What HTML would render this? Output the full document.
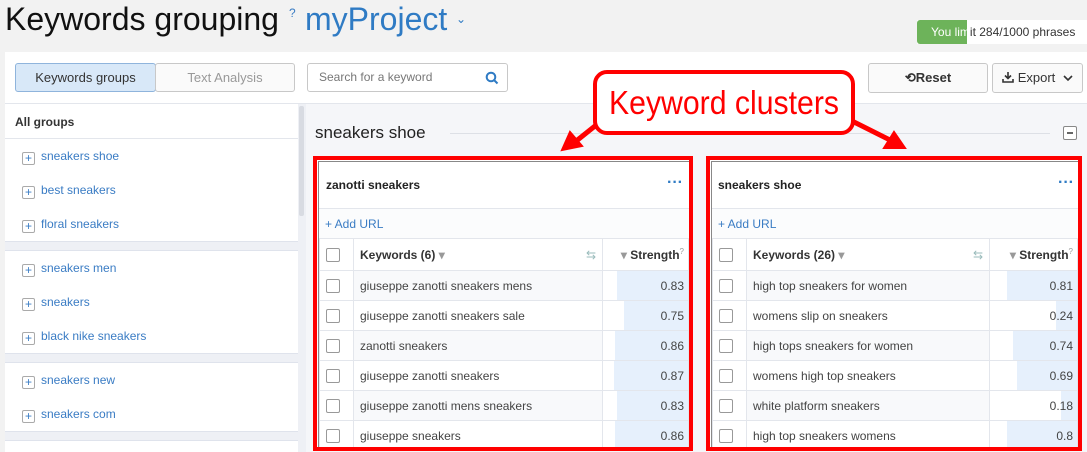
<!DOCTYPE html>
<html><head><meta charset="utf-8"><style>
*{box-sizing:border-box;margin:0;padding:0}
body{width:1087px;height:452px;overflow:hidden;background:#f2f2f2;font-family:"Liberation Sans",sans-serif;position:relative;color:#333}
.a{position:absolute}
.btn{position:absolute;border:1px solid #c8c8c8;border-radius:3px;background:#fafafa;font-size:13px;text-align:center;line-height:27px}
.item{position:absolute;left:22px;font-size:12px;color:#3a7cc4}
.item i{display:inline-block;width:13px;height:13px;border:1px solid #aaa;border-radius:2px;font-style:normal;text-align:center;line-height:11px;font-size:12px;color:#3a7cc4;margin-right:6px;vertical-align:-2px;background:#fff}
.sep{position:absolute;left:5px;width:293px;background:#eef0f5;border-top:1px solid #dfe3ec;border-bottom:1px solid #dfe3ec}
.card{position:absolute;top:156px;height:295px;border:4px solid #f00;background:#fff;overflow:hidden}
.card .inner{position:absolute;left:1px;top:1px;right:0;bottom:0;border-left:1px solid #888;border-top:1px solid #888}
table{border-collapse:collapse;position:absolute;left:0;top:76px;width:100%;font-size:12px}
td{border:1px solid #e3e6ec;height:30px;padding:0 6px;color:#444;position:relative}
td.c{width:34px}
td.c span{display:block;width:14px;height:14px;border:1px solid #999;border-radius:2px;background:#fff}
tr.h td{height:32px;font-weight:bold;color:#333}
tr.g td.k{background:#f8f9fb}
td.s{text-align:right;padding-right:4px}
td.s b{position:absolute;right:0;top:0;bottom:0;background:#e6f0fc;font-weight:normal}
td.s em{position:relative;font-style:normal}
</style></head><body>
<div class="a" style="left:5px;top:1px;font-size:32px;color:#111">Keywords grouping</div>
<div class="a" style="left:289px;top:6px;font-size:12px;color:#3a7cc4">?</div>
<div class="a" style="left:305px;top:1px;font-size:32px;color:#2f7bc4">myProject</div>
<div class="a" style="left:456px;top:12px;font-size:12px;color:#2f7bc4">&#8964;</div>
<div class="a" style="left:917px;top:20px;width:170px;height:24px;background:#fff;font-size:12px;line-height:24px;color:#333"><span style="position:absolute;left:0;top:0;width:50px;height:24px;background:#6db35a;border-radius:3px 0 0 3px"></span><span style="position:relative;padding-left:14px"><span style="color:#fff">You lim</span>it 284/1000 phrases</span></div>
<div class="a" style="left:5px;top:52px;width:1082px;height:400px;background:#fff"></div>
<div class="btn" style="left:15px;top:63px;width:141px;height:29px;background:#d8e8f8;border-color:#8fb4dc;color:#333">Keywords groups</div>
<div class="btn" style="left:155px;top:63px;width:140px;height:29px;color:#999;background:#fafafa">Text Analysis</div>
<div class="btn" style="left:307px;top:63px;width:201px;height:29px;background:#fff;text-align:left;padding-left:11px;color:#777;font-size:12px">Search for a keyword
<svg class="a" style="left:177px;top:7px" width="14" height="14" viewBox="0 0 14 14"><circle cx="6" cy="6" r="4.3" fill="none" stroke="#2f7bc4" stroke-width="2"/><path d="M9 9l3.5 3.5" stroke="#2f7bc4" stroke-width="2"/></svg></div>
<div class="btn" style="left:868px;top:63px;width:120px;height:30px;font-weight:bold;color:#333">&#10226;Reset</div>
<div class="btn" style="left:992px;top:63px;width:91px;height:30px;color:#333"><svg width="12" height="12" viewBox="0 0 12 12" style="vertical-align:-1px"><path d="M6 1v6M3 4.5L6 7.5 9 4.5M1 8v3h10V8" fill="none" stroke="#333" stroke-width="1.6"/></svg> Export <svg width="10" height="8" viewBox="0 0 10 8" style="margin-left:4px"><path d="M1 2l4 4 4-4" fill="none" stroke="#333" stroke-width="1.6"/></svg></div>
<div class="a" style="left:5px;top:103px;width:1082px;height:1px;background:#e3e6ec"></div>
<div class="a" style="left:298px;top:104px;width:8px;height:348px;background:#eef0f5"></div>
<div class="a" style="left:299px;top:106px;width:5px;height:110px;background:#d8dbe2;border-radius:2px"></div>
<div class="a" style="left:306px;top:104px;width:781px;height:348px;background:#f5f6f9"></div>
<div class="a" style="left:15px;top:115px;font-size:12px;font-weight:bold;color:#333">All groups</div>
<div class="a" style="left:5px;top:138px;width:293px;height:1px;background:#e3e6ec"></div>
<div class="item" style="top:149px"><i>+</i>sneakers shoe</div>
<div class="item" style="top:183px"><i>+</i>best sneakers</div>
<div class="item" style="top:217px"><i>+</i>floral sneakers</div>
<div class="sep" style="top:241px;height:10px"></div>
<div class="item" style="top:261px"><i>+</i>sneakers men</div>
<div class="item" style="top:295px"><i>+</i>sneakers</div>
<div class="item" style="top:329px"><i>+</i>black nike sneakers</div>
<div class="sep" style="top:353px;height:10px"></div>
<div class="item" style="top:373px"><i>+</i>sneakers new</div>
<div class="item" style="top:407px"><i>+</i>sneakers com</div>
<div class="sep" style="top:431px;height:10px"></div>
<div class="a" style="left:315px;top:123px;font-size:17px;color:#222">sneakers shoe</div>
<div class="a" style="left:450px;top:133px;width:600px;height:1px;background:#dde0e6"></div>
<div class="a" style="left:1063px;top:126px;width:14px;height:14px;border:1px solid #888;border-radius:2px;background:#fff"><div class="a" style="left:3px;top:5px;width:6px;height:1.5px;background:#666"></div></div>

<div class="card" style="left:313px;width:380px">
<div class="inner">
<div class="a" style="left:7px;top:16px;font-size:12px;font-weight:bold;color:#222">zanotti sneakers</div>
<div class="a" style="right:6px;top:12px;font-size:16px;color:#2f7bc4;font-weight:bold">&middot;&middot;&middot;</div>
<div class="a" style="left:0;right:0;top:46px;height:31px;border-top:1px solid #e3e6ec;background:#fbfcfd;font-size:12px;color:#3a7cc4;padding:8px 6px">+ Add URL</div>
<table>
<tr class="h"><td class="c"><span></span></td><td class="k">Keywords (6) <span style="color:#999">&#9662;</span><span style="float:right;color:#9bb;font-weight:normal">&#8646;</span></td><td class="s" style="width:86px"><span style="color:#999">&#9662;</span> Strength<sup style="color:#999;font-weight:normal;font-size:8px">?</sup></td></tr>
<tr class="g"><td class="c"><span></span></td><td class="k">giuseppe zanotti sneakers mens</td><td class="s"><b style="width:83%"></b><em>0.83</em></td></tr>
<tr><td class="c"><span></span></td><td class="k">giuseppe zanotti sneakers sale</td><td class="s"><b style="width:75%"></b><em>0.75</em></td></tr>
<tr class="g"><td class="c"><span></span></td><td class="k">zanotti sneakers</td><td class="s"><b style="width:86%"></b><em>0.86</em></td></tr>
<tr><td class="c"><span></span></td><td class="k">giuseppe zanotti sneakers</td><td class="s"><b style="width:87%"></b><em>0.87</em></td></tr>
<tr class="g"><td class="c"><span></span></td><td class="k">giuseppe zanotti mens sneakers</td><td class="s"><b style="width:83%"></b><em>0.83</em></td></tr>
<tr><td class="c"><span></span></td><td class="k">giuseppe sneakers</td><td class="s"><b style="width:86%"></b><em>0.86</em></td></tr>
</table></div></div>

<div class="card" style="left:706px;width:376px">
<div class="inner">
<div class="a" style="left:6px;top:16px;font-size:12px;font-weight:bold;color:#222">sneakers shoe</div>
<div class="a" style="right:4px;top:12px;font-size:16px;color:#2f7bc4;font-weight:bold">&middot;&middot;&middot;</div>
<div class="a" style="left:0;right:0;top:46px;height:31px;border-top:1px solid #e3e6ec;background:#fbfcfd;font-size:12px;color:#3a7cc4;padding:8px 6px">+ Add URL</div>
<table>
<tr class="h"><td class="c" style="width:31px"><span></span></td><td class="k">Keywords (26) <span style="color:#999">&#9662;</span><span style="float:right;color:#9bb;font-weight:normal">&#8646;</span></td><td class="s" style="width:88px"><span style="color:#999">&#9662;</span> Strength<sup style="color:#999;font-weight:normal;font-size:8px">?</sup></td></tr>
<tr class="g"><td class="c"><span></span></td><td class="k">high top sneakers for women</td><td class="s"><b style="width:81%"></b><em>0.81</em></td></tr>
<tr><td class="c"><span></span></td><td class="k">womens slip on sneakers</td><td class="s"><b style="width:24%"></b><em>0.24</em></td></tr>
<tr class="g"><td class="c"><span></span></td><td class="k">high tops sneakers for women</td><td class="s"><b style="width:74%"></b><em>0.74</em></td></tr>
<tr><td class="c"><span></span></td><td class="k">womens high top sneakers</td><td class="s"><b style="width:69%"></b><em>0.69</em></td></tr>
<tr class="g"><td class="c"><span></span></td><td class="k">white platform sneakers</td><td class="s"><b style="width:18%"></b><em>0.18</em></td></tr>
<tr><td class="c"><span></span></td><td class="k">high top sneakers womens</td><td class="s"><b style="width:80%"></b><em>0.8</em></td></tr>
</table></div></div>

<svg class="a" style="left:0;top:0" width="1087" height="452">
<g fill="#f00" stroke="#f00" stroke-width="5" stroke-linecap="round">
<line x1="600" y1="122" x2="575" y2="142"/>
<polygon points="562,150 570,132 582,146" stroke-width="2"/>
<line x1="850" y1="120" x2="890" y2="140"/>
<polygon points="905,148 884,148 894,132" stroke-width="2"/>
</g>
<rect x="595" y="72" width="258" height="61" rx="12" fill="#fff" stroke="#f00" stroke-width="4"/>
<text x="609" y="114" font-family="Liberation Sans" font-size="33" fill="#f00" textLength="230" lengthAdjust="spacingAndGlyphs">Keyword clusters</text>
</svg>
</body></html>
